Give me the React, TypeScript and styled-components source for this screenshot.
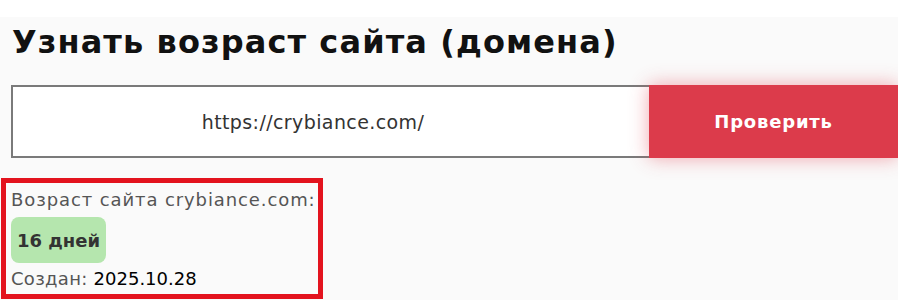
import styled, { createGlobalStyle } from 'styled-components';

const GlobalStyle = createGlobalStyle`
	html, body {
		margin: 0;
		padding: 0;
		background: #fafafa;
		font-family: "DejaVu Sans", Inter, sans-serif;
	}
`;

const StyledTopStrip = styled.div`
	height: 17px;
	background: #ffffff;
`;

const StyledPage = styled.main`
	display: flex;
	flex-direction: column;
	padding: 0 0 0 1px;
	height: 283px;
	overflow: hidden;
`;

const StyledTitle = styled.h1`
	margin: 3px 0 0 11px;
	font-size: 32px;
	line-height: 44px;
	font-weight: 700;
	letter-spacing: 1.1px;
	color: #111;
`;

const StyledForm = styled.form`
	display: flex;
	margin: 21px 0 0 10px;
	height: 73px;
`;

const StyledInput = styled.input`
	flex: 1;
	min-width: 0;
	box-sizing: border-box;
	height: 100%;
	border: 2px solid #7a7a7a;
	border-right: none;
	background: #ffffff;
	padding: 0 36px 0 0;
	text-align: center;
	font-family: inherit;
	font-size: 19px;
	letter-spacing: 0.4px;
	color: #333;
	outline: none;
`;

const StyledButton = styled.button`
	width: 249px;
	height: 100%;
	border: none;
	background: #dc3b4b;
	color: #ffffff;
	font-family: inherit;
	font-size: 18px;
	font-weight: 700;
	letter-spacing: 0.8px;
	box-shadow: 0 0 18px rgba(226, 60, 76, 0.45);
	cursor: pointer;
`;

const StyledResult = styled.section`
	display: flex;
	flex-direction: column;
	align-items: flex-start;
	align-self: flex-start;
	margin-top: 20px;
	padding: 4px 4px 2px 5px;
	border: 5px solid #e3131e;
	box-sizing: border-box;
	width: 322px;
`;

const StyledLabel = styled.div<{ $spacing?: number }>`
	font-size: 18px;
	line-height: 26px;
	letter-spacing: ${({ $spacing = 0.9 }) => $spacing}px;
	color: #555;
	white-space: nowrap;
`;

const StyledBadge = styled.div`
	margin: 4px 0 3px;
	padding: 0 6px;
	height: 46px;
	display: flex;
	align-items: center;
	background: #b5e6ae;
	border-radius: 8px;
	font-size: 18px;
	font-weight: 700;
	color: #333;
`;

const StyledDate = styled.span`
	letter-spacing: 0;
	color: #000;
`;

export default function App() {
	return (
		<>
			<GlobalStyle />
			<StyledTopStrip />
			<StyledPage>
				<StyledTitle>Узнать возраст сайта (домена)</StyledTitle>
				<StyledForm onSubmit={(e) => e.preventDefault()}>
					<StyledInput defaultValue="https://crybiance.com/" />
					<StyledButton type="submit">Проверить</StyledButton>
				</StyledForm>
				<StyledResult>
					<StyledLabel>Возраст сайта crybiance.com:</StyledLabel>
					<StyledBadge>16 дней</StyledBadge>
					<StyledLabel $spacing={0.3}>
						Создан: <StyledDate>2025.10.28</StyledDate>
					</StyledLabel>
				</StyledResult>
			</StyledPage>
		</>
	);
}
